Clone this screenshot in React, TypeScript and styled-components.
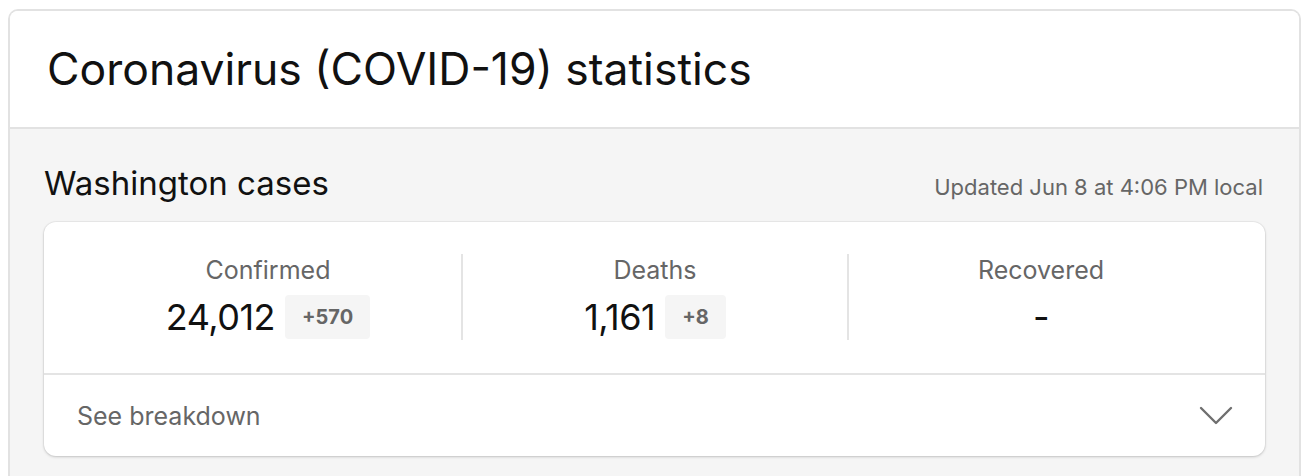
import { FC } from 'react'
import styled, { createGlobalStyle } from 'styled-components'

const GlobalStyle = createGlobalStyle`
  html, body {
    margin: 0;
    padding: 0;
    background: #ffffff;
    font-family: Inter, 'Liberation Sans', Arial, sans-serif;
  }
`

interface Stat {
  label: string
  value: string
  delta?: string
}

const stats: Stat[] = [
  { label: 'Confirmed', value: '24,012', delta: '+570' },
  { label: 'Deaths', value: '1,161', delta: '+8' },
  { label: 'Recovered', value: '-' },
]

const App: FC = () => {
  return (
    <>
      <GlobalStyle />
      <Page>
        <Card>
          <Header>
            <Title>Coronavirus (COVID-19) statistics</Title>
          </Header>
          <Body>
            <SectionHead>
              <Region>Washington cases</Region>
              <Updated>Updated Jun 8 at 4:06 PM local</Updated>
            </SectionHead>
            <StatsCard>
              <StatsRow>
                {stats.map((s) => (
                  <StatCol key={s.label}>
                    <Label>{s.label}</Label>
                    <ValueLine>
                      <Value>{s.value}</Value>
                      {s.delta && <Delta>{s.delta}</Delta>}
                    </ValueLine>
                  </StatCol>
                ))}
              </StatsRow>
              <Breakdown>
                <span>See breakdown</span>
                <svg width='34' height='20' viewBox='0 0 34 20' fill='none'>
                  <path d='M2 2 L17 17 L32 2' stroke='#6f6f6f' strokeWidth='2.4' strokeLinecap='round' strokeLinejoin='round' />
                </svg>
              </Breakdown>
            </StatsCard>
          </Body>
        </Card>
      </Page>
    </>
  )
}

export default App

const Page = styled.div`
  padding: 9px 13px 0 8px;
`

const Card = styled.div`
  border: 2px solid #e2e2e2;
  border-bottom: none;
  border-radius: 10px 10px 0 0;
  overflow: hidden;
  height: 467px;
  box-sizing: border-box;
  display: flex;
  flex-direction: column;
`

const Header = styled.header`
  height: 118px;
  box-sizing: border-box;
  border-bottom: 2px solid #e2e2e2;
  background: #ffffff;
  display: flex;
  align-items: center;
  padding: 0 37px;
`

const Title = styled.h1`
  margin: 0;
  font-size: 44.5px;
  font-weight: 400;
  color: #111;
`

const Body = styled.div`
  flex: 1;
  background: #f5f5f5;
  padding: 0 34px 0 34px;
`

const SectionHead = styled.div`
  display: flex;
  justify-content: space-between;
  align-items: baseline;
  height: 93px;
  padding: 34px 2px 0 0;
  box-sizing: border-box;
`

const Region = styled.h2`
  margin: 0;
  font-size: 33px;
  font-weight: 400;
  color: #111;
`

const Updated = styled.div`
  font-size: 22px;
  color: #666;
`

const StatsCard = styled.div`
  background: #fff;
  border-radius: 12px;
  box-shadow: 0 1px 3px rgba(0, 0, 0, 0.18), 0 0 0 1px rgba(0, 0, 0, 0.04);
`

const StatsRow = styled.div`
  display: grid;
  grid-template-columns: repeat(3, 1fr);
  padding: 32px 32px 33px 31px;
  border-bottom: 2px solid #e4e4e4;
`

const StatCol = styled.div`
  display: flex;
  flex-direction: column;
  align-items: center;
  gap: 9px;
  height: 86px;
  & + & {
    border-left: 2px solid #e4e4e4;
  }
`

const Label = styled.div`
  font-size: 25px;
  color: #666;
  line-height: 32px;
`

const ValueLine = styled.div`
  display: flex;
  align-items: center;
  gap: 10px;
`

const Value = styled.div`
  font-size: 36px;
  color: #111;
  line-height: 44px;
  letter-spacing: -0.5px;
`

const Delta = styled.div`
  background: #f5f5f5;
  border-radius: 4px;
  padding: 0 17px;
  height: 44px;
  display: flex;
  align-items: center;
  font-size: 20px;
  font-weight: 700;
  color: #666;
`

const Breakdown = styled.div`
  display: flex;
  justify-content: space-between;
  align-items: center;
  height: 81px;
  padding: 0 32px 0 33px;
  font-size: 25px;
  color: #666;
`
